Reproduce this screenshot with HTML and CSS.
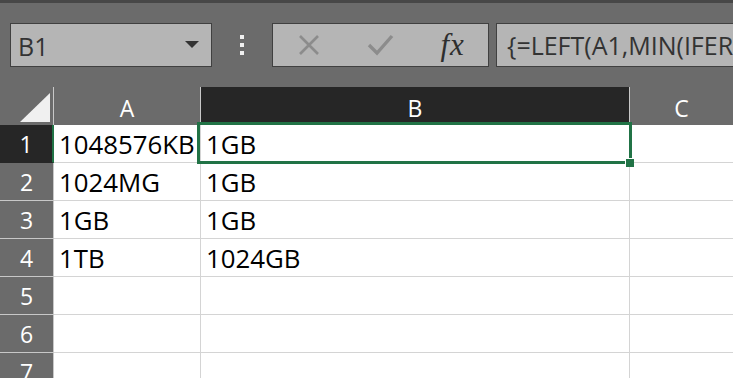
FILE: index.html
```html
<!DOCTYPE html>
<html lang="en">
<head>
<meta charset="utf-8">
<title>Sheet</title>
<link rel="stylesheet" href="styles.css">
</head>
<body>
<div class="app">
  <div class="topstrip"></div>
  <div class="toolbar">
    <div class="namebox"><span class="name">B1</span><span class="caret"></span></div>
    <div class="dots"><i></i><i></i><i></i></div>
    <div class="fbuttons">
      <span class="fbtn">
        <svg width="22" height="22" viewBox="0 0 22 22"><path d="M2 2 L20 20 M20 2 L2 20" stroke="#8c8c8c" stroke-width="2.6" fill="none"/></svg>
      </span>
      <span class="fbtn">
        <svg width="28" height="22" viewBox="0 0 28 22"><path d="M2 11 L10 19 L25 2" stroke="#8c8c8c" stroke-width="3.4" fill="none"/></svg>
      </span>
      <span class="fbtn fx"><span class="f">f</span><span class="x">x</span></span>
    </div>
    <div class="formula">{=LEFT(A1,MIN(IFERROR(FIND({"KB","MB","GB","TB"},A1),"")))-1)*1024^(MATCH(RIGHT(A1,2),{"KB","MB","GB","TB"},0)-3)&amp;"GB"}</div>
  </div>
  <div class="sheet">
    <div class="grid">
      <div class="corner"><span class="tri"></span></div>
      <div class="colhead">A</div>
      <div class="colhead active">B</div>
      <div class="colhead last">C</div>

      <div class="rowhead active">1</div>
      <div class="cell">1048576KB</div>
      <div class="cell">1GB</div>
      <div class="cell last"></div>

      <div class="rowhead">2</div>
      <div class="cell">1024MG</div>
      <div class="cell">1GB</div>
      <div class="cell last"></div>

      <div class="rowhead">3</div>
      <div class="cell">1GB</div>
      <div class="cell">1GB</div>
      <div class="cell last"></div>

      <div class="rowhead">4</div>
      <div class="cell">1TB</div>
      <div class="cell">1024GB</div>
      <div class="cell last"></div>

      <div class="rowhead">5</div>
      <div class="cell"></div>
      <div class="cell"></div>
      <div class="cell last"></div>

      <div class="rowhead">6</div>
      <div class="cell"></div>
      <div class="cell"></div>
      <div class="cell last"></div>

      <div class="rowhead">7</div>
      <div class="cell"></div>
      <div class="cell"></div>
      <div class="cell last"></div>
    </div>
    <div class="selection"><span class="handle"></span></div>
  </div>
</div>
</body>
</html>
```

FILE: styles.css
```css
html, body {
  margin: 0;
  padding: 0;
  width: 733px;
  height: 378px;
  overflow: hidden;
  background: #6b6b6b;
}

.app {
  display: flex;
  flex-direction: column;
  width: 733px;
  height: 378px;
  overflow: hidden;
  font-family: "Open Sans", "Liberation Sans", sans-serif;
}

.topstrip {
  height: 3px;
  background: #474747;
  flex: none;
}

.toolbar {
  flex: none;
  height: 84px;
  box-sizing: border-box;
  padding: 20px 0 0 10px;
  display: flex;
  align-items: flex-start;
  background: #6b6b6b;
}

.namebox {
  width: 202px;
  height: 44px;
  box-sizing: border-box;
  border: 1px solid #404040;
  background: #b5b5b5;
  display: flex;
  align-items: center;
  justify-content: space-between;
  padding: 0 12px 0 7px;
}

.name {
  font-size: 25px;
  color: #333;
  line-height: 1;
  padding-top: 2px;
}

.caret {
  width: 0;
  height: 0;
  border-left: 7px solid transparent;
  border-right: 7px solid transparent;
  border-top: 7px solid #333;
  margin-bottom: 1px;
}

.dots {
  margin-left: 28px;
  margin-top: 12px;
  display: flex;
  flex-direction: column;
  gap: 4px;
}

.dots i {
  display: block;
  width: 4px;
  height: 4px;
  background: #f0f0f0;
}

.fbuttons {
  margin-left: 28px;
  width: 217px;
  height: 44px;
  box-sizing: border-box;
  border: 1px solid #404040;
  background: #b5b5b5;
  display: flex;
  align-items: center;
}

.fbtn {
  width: 72px;
  height: 42px;
  display: flex;
  align-items: center;
  justify-content: center;
}

.fbtn svg {
  display: block;
}

.fx {
  font-family: "Liberation Serif", "DejaVu Serif", serif;
  font-style: italic;
  color: #2e2e2e;
  font-size: 31px;
  line-height: 1;
  padding-bottom: 2px;
}

.fx .x {
  margin-left: 1px;
}

.formula {
  margin-left: 7px;
  flex: 1;
  min-width: 0;
  height: 44px;
  box-sizing: border-box;
  border: 1px solid #404040;
  border-right: none;
  background: #b5b5b5;
  color: #333;
  font-size: 25px;
  line-height: 42px;
  padding-left: 10px;
  white-space: nowrap;
  overflow: hidden;
}

.sheet {
  position: relative;
  flex: 1;
  background: #ffffff;
}

.grid {
  display: grid;
  grid-template-columns: 54px 147px 429px 1fr;
  grid-template-rows: 38px repeat(7, 38px);
}

.corner {
  background: #6b6b6b;
  border-right: 1px solid #c8c8c8;
  position: relative;
}

.tri {
  position: absolute;
  right: 3px;
  bottom: 3px;
  width: 0;
  height: 0;
  border-left: 30px solid transparent;
  border-bottom: 29px solid #f0f0f0;
}

.colhead {
  background: #6b6b6b;
  color: #ffffff;
  font-size: 23px;
  line-height: 34px;
  padding-top: 4px;
  text-align: center;
  border-right: 1px solid #c8c8c8;
  box-sizing: border-box;
}

.colhead.active {
  background: #262626;
}

.colhead.last {
  border-right: none;
}

.rowhead {
  background: #6b6b6b;
  color: #ffffff;
  font-size: 23px;
  line-height: 35px;
  padding-top: 2px;
  text-align: center;
  border-right: 1px solid #c8c8c8;
  border-bottom: 1px solid #c8c8c8;
  box-sizing: border-box;
}

.rowhead.active {
  background: #262626;
  border-right: 2px solid #217346;
  border-bottom-color: #262626;
}

.cell {
  font-family: "Open Sans", "Liberation Sans", sans-serif;
  font-size: 25.8px;
  color: #000;
  line-height: 36px;
  padding: 1px 0 0 5px;
  border-right: 1px solid #d4d4d4;
  border-bottom: 1px solid #d4d4d4;
  box-sizing: border-box;
  white-space: nowrap;
  overflow: hidden;
}

.cell.last {
  border-right: none;
}

.selection {
  position: absolute;
  left: 197px;
  top: 35px;
  width: 435px;
  height: 42px;
  box-sizing: border-box;
  border: 3px solid #217346;
  pointer-events: none;
}

.handle {
  position: absolute;
  right: -5px;
  bottom: -6px;
  width: 8px;
  height: 8px;
  background: #217346;
  border: 1px solid #ffffff;
  border-right: none;
  border-bottom: none;
}
```
